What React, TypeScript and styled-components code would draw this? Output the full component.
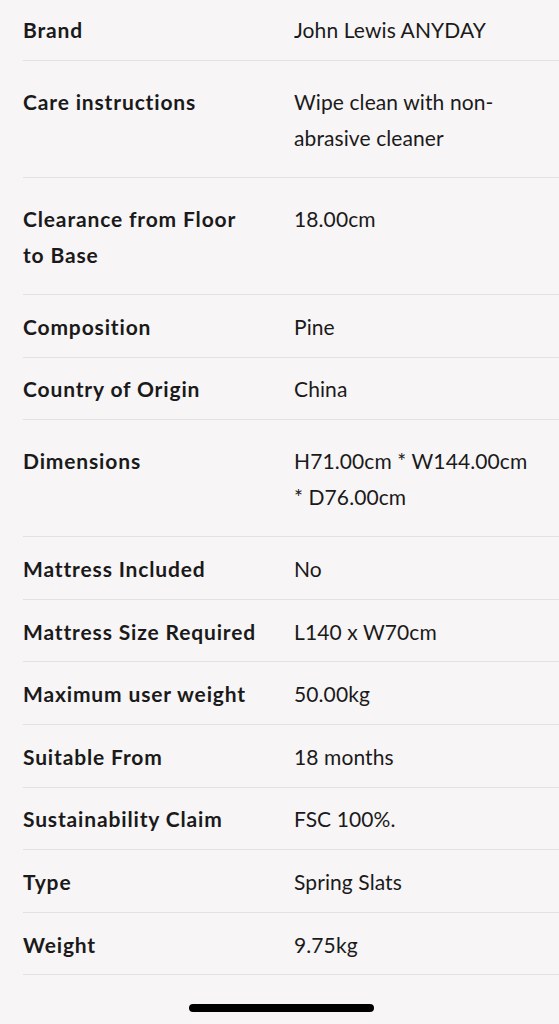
import { createGlobalStyle, styled } from 'styled-components';

interface Spec {
  label: string
  value: string
  lines?: number
}

const specs: Spec[] = [
  { label: 'Brand', value: 'John Lewis ANYDAY' },
  { label: 'Care instructions', value: 'Wipe clean with non-abrasive cleaner', lines: 2 },
  { label: 'Clearance from Floor to Base', value: '18.00cm', lines: 2 },
  { label: 'Composition', value: 'Pine' },
  { label: 'Country of Origin', value: 'China' },
  { label: 'Dimensions', value: 'H71.00cm * W144.00cm * D76.00cm', lines: 2 },
  { label: 'Mattress Included', value: 'No' },
  { label: 'Mattress Size Required', value: 'L140 x W70cm' },
  { label: 'Maximum user weight', value: '50.00kg' },
  { label: 'Suitable From', value: '18 months' },
  { label: 'Sustainability Claim', value: 'FSC 100%.' },
  { label: 'Type', value: 'Spring Slats' },
  { label: 'Weight', value: '9.75kg' },
];

export default function App() {
  return (
    <>
      <GlobalStyle />
      <Page>
        <SpecList>
          {specs.map((s, i) => (
            <Row key={s.label} $tall={(s.lines ?? 1) > 1} $first={i === 0}>
              <Label>{s.label}</Label>
              <Value>{s.value}</Value>
            </Row>
          ))}
        </SpecList>
        <HomeBar />
      </Page>
    </>
  )
}

const GlobalStyle = createGlobalStyle`
  html, body {
    margin: 0;
    padding: 0;
    background: #f7f5f6;
  }
  body {
    font-family: Lato, 'Noto Sans', sans-serif;
    color: #1b1a1b;
  }
`;

const Page = styled.div`
  width: 559px;
  height: 1024px;
  overflow: hidden;
  display: flex;
  flex-direction: column;
`;

const SpecList = styled.div`
  display: flex;
  flex-direction: column;
  padding-left: 23px;
`;

const Row = styled.div<{ $tall: boolean; $first: boolean }>`
  display: grid;
  grid-template-columns: 240px 242px;
  column-gap: 31px;
  padding-top: ${p => (p.$first ? '12.2px' : p.$tall ? '23px' : '13.8px')};
  padding-bottom: ${p => (p.$tall ? '21px' : '11.8px')};
  border-bottom: 1px solid #e3e1e2;
  align-items: start;
  font-size: 21px;
  line-height: 36px;
`;

const Label = styled.div`
  font-weight: 700;
  letter-spacing: 0.85px;
`;

const Value = styled.div`
  font-weight: 400;
  letter-spacing: 0.1px;
`;

const HomeBar = styled.div`
  align-self: center;
  margin-top: 29px;
  margin-left: 3px;
  width: 185px;
  height: 8px;
  border-radius: 4px;
  background: #000;
`;
